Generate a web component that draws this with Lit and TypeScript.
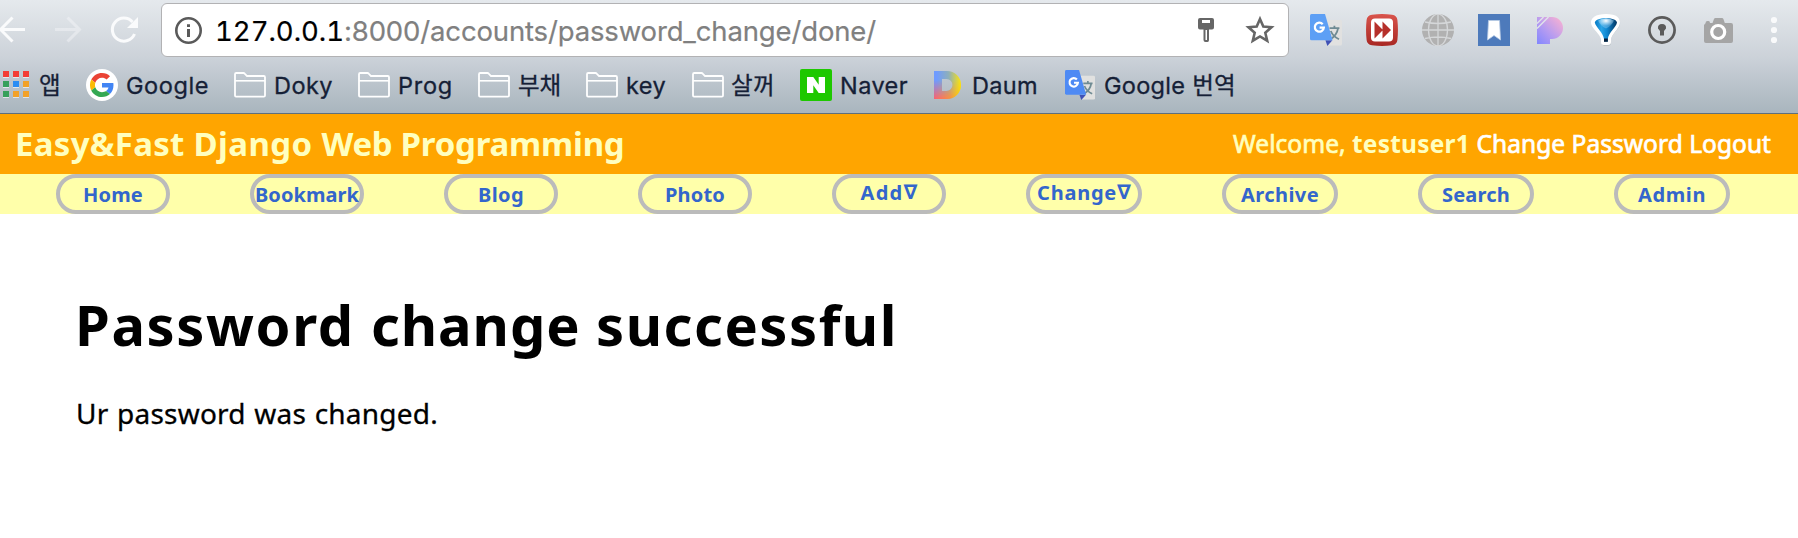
import { LitElement, html, svg, css } from "lit";
import { customElement, property } from "lit/decorators.js";
import { styleMap } from "lit/directives/style-map.js";

/** A run of text whose tracking is adjusted so that it takes up a given width. */
@customElement("fit-text")
class FitText extends LitElement {
  @property({ type: Number }) width = 0;

  static styles = css`
    :host { display: inline-block; white-space: pre; }
  `;

  updated() {
    const count = [...(this.textContent ?? "")].length;
    this.style.letterSpacing = "0px";
    const natural = this.getBoundingClientRect().width;
    this.style.letterSpacing = `${(this.width - natural) / count}px`;
  }

  render() {
    return html`<slot></slot>`;
  }
}

const folder = html`<svg width="32" height="32" viewBox="0 0 32 32" fill="none" stroke="#fff" stroke-width="1.8">
  <path d="M1 26.6V5.2Q1 4 2.2 4H9.4Q10.2 4 10.7 4.6L13 7H29.8Q31 7 31 8.2V26.4Q31 27.6 29.8 27.6H2Q1 27.6 1 26.6Z"/>
  <path d="M1 11.8H31" stroke-width="1.6"/>
</svg>`;

const translate = (size: number, front: string) => html`<svg width=${size} height=${size} viewBox="0 0 32 32">
  <path d="M13 6H30.5Q32 6 32 7.5V30Q32 31.5 30.5 31.5H18Z" fill="#e1e1e0"/>
  <g fill="none" stroke="#6f8b93" stroke-width="1.8">
    <path d="M19.5 14.2H29.4M24.4 11.8V14.2M20.5 25.3Q27 21 28 14.4M20.8 17Q23 22.6 29 25.3"/>
  </g>
  <path d="M15.4 26.3H22.4L17.4 32Z" fill="#3f51b5"/>
  <path d="M1.5 0H15L22.6 26.3H1.5Q0 26.3 0 24.8V1.5Q0 0 1.5 0Z" fill=${front}/>
  <path d="M12.7 10.2A4.5 4.5 0 1 0 13.8 13.6H9.6" fill="none" stroke="#fff" stroke-width="2.3"/>
</svg>`;

const apps = html`<svg width="28" height="32" viewBox="0 0 28 32">
  ${["#f33c35", "#f33c35", "#f33c35", "#36a05b", "#2a8df4", "#f2a128", "#36a05b", "#f2a128", "#f2a128"].map(
    (c, i) => svg`<rect x=${(i % 3) * 10} y=${3 + Math.floor(i / 3) * 10} width="6" height="6" fill="#fff" opacity=".6"/>
      <rect x=${(i % 3) * 10} y=${2 + Math.floor(i / 3) * 10} width="6" height="6" fill=${c}/>`
  )}
</svg>`;

const google = html`<svg width="32" height="32" viewBox="0 0 32 32">
  <circle cx="16" cy="16" r="16" fill="#fff"/>
  <g transform="translate(4 4)">
    <path fill="#ea4335" d="M12 4.76c1.77 0 3.35.6 4.6 1.8l3.42-3.42C17.95 1.19 15.24 0 12 0 7.31 0 3.26 2.7 1.28 6.62l3.98 3.08C6.22 6.86 8.87 4.76 12 4.76Z"/>
    <path fill="#4285f4" d="M23.49 12.28c0-.79-.07-1.54-.19-2.28H12v4.51h6.47c-.29 1.48-1.14 2.73-2.4 3.58l3.87 3c2.26-2.09 3.55-5.17 3.55-8.81Z"/>
    <path fill="#fbbc05" d="M5.26 14.3a7.2 7.2 0 0 1 0-4.6L1.28 6.62a12 12 0 0 0 0 10.76Z"/>
    <path fill="#34a853" d="M12 24c3.24 0 5.96-1.06 7.94-2.91l-3.87-3c-1.08.72-2.45 1.16-4.07 1.16-3.13 0-5.78-2.1-6.74-4.95l-3.98 3.08C3.26 21.3 7.31 24 12 24Z"/>
  </g>
</svg>`;

const naver = html`<svg width="32" height="32" viewBox="0 0 32 32">
  <rect width="32" height="32" rx="2" fill="#1ec800"/>
  <path d="M7 8H13.3L18.7 15.8V8H25V24H18.7L13.3 16.2V24H7Z" fill="#fff"/>
</svg>`;

const daum = html`<svg width="28" height="32" viewBox="0 0 28 32">
  <defs>
    <linearGradient id="d1" x1="0" y1="0" x2="1" y2="0">
      <stop offset=".1" stop-color="#6f9bff"/><stop offset=".55" stop-color="#8fb0b8"/><stop offset="1" stop-color="#ffe50a"/>
    </linearGradient>
    <linearGradient id="d2" x1="0" y1="0" x2="1" y2="0">
      <stop offset="0" stop-color="#ff5f6e"/><stop offset=".6" stop-color="#ff9038"/><stop offset="1" stop-color="#ffd400"/>
    </linearGradient>
    <linearGradient id="d3" x1="0" y1="0" x2="0" y2="1">
      <stop offset=".35" stop-color="#000"/><stop offset=".95" stop-color="#fff"/>
    </linearGradient>
    <mask id="dm"><rect width="28" height="32" fill="url(#d3)"/></mask>
  </defs>
  <path fill-rule="evenodd" fill="url(#d1)" d="M0 2H13A14 14 0 0 1 13 30H0ZM8 10V22H12.5A6 6 0 0 0 12.5 10Z"/>
  <path mask="url(#dm)" fill-rule="evenodd" fill="url(#d2)" d="M0 2H13A14 14 0 0 1 13 30H0ZM8 10V22H12.5A6 6 0 0 0 12.5 10Z"/>
</svg>`;

/* lead: space before the icon; gap: icon to label; width: label width */
const bookmarks = [
  { icon: apps, label: "앱", lead: 3, gap: 8, width: 22 },
  { icon: google, label: "Google", lead: 25, gap: 8, width: 83 },
  { icon: folder, label: "Doky", lead: 25, gap: 8, width: 59 },
  { icon: folder, label: "Prog", lead: 25, gap: 8, width: 55 },
  { icon: folder, label: "부채", lead: 25, gap: 8, width: 43 },
  { icon: folder, label: "key", lead: 25, gap: 8, width: 40 },
  { icon: folder, label: "살꺼", lead: 26, gap: 7, width: 44 },
  { icon: naver, label: "Naver", lead: 25, gap: 8, width: 68 },
  { icon: daum, label: "Daum", lead: 26, gap: 10, width: 66 },
  { icon: translate(30, "#4e8af4"), label: "Google 번역", lead: 27, gap: 9, width: 132 },
];

const extensions = [
  translate(32, "#5d9ff5"),
  html`<svg width="32" height="32" viewBox="0 0 32 32">
    <defs><linearGradient id="r1" x1="0" y1="0" x2="0" y2="1"><stop offset="0" stop-color="#d9544c"/><stop offset="1" stop-color="#a82823"/></linearGradient></defs>
    <path d="M6 .7Q16-.6 26 .7Q31 1.4 31.4 6Q32.5 16 31.4 26Q31 30.6 26 31.3Q16 32.6 6 31.3Q1 30.6.6 26Q-.5 16 .6 6Q1 1.4 6 .7Z" fill="url(#r1)"/>
    <rect x="5" y="4.5" width="22" height="23" rx="4" fill="#fff"/>
    <path d="M8.5 7.5L17 16L8.5 24.5ZM16.5 7.5L25 16L16.5 24.5Z" fill="#b6302b"/>
  </svg>`,
  html`<svg width="32" height="32" viewBox="0 0 32 32">
    <circle cx="16" cy="16" r="16" fill="#b1b1b1"/>
    <g fill="none" stroke="#d5d7d9" stroke-width="1.3">
      <path d="M16 0V32M0 16H32M3 8Q16 11 29 8M3 24.5Q16 21.5 29 24.5"/><ellipse cx="16" cy="16" rx="9.5" ry="16"/>
    </g>
  </svg>`,
  html`<svg width="32" height="32" viewBox="0 0 32 32">
    <rect width="32" height="32" fill="#4d7abb"/>
    <path d="M10.5 6.5H21.5L22.5 26L16 21.5L9.5 26Z" fill="#fff" stroke="#b9cbe5" stroke-width=".8"/>
  </svg>`,
  html`<svg width="32" height="32" viewBox="0 0 32 32">
    <defs><linearGradient id="p1" x1="0" y1="1" x2="1" y2="0"><stop offset="0" stop-color="#8186ff"/><stop offset=".45" stop-color="#b79cf0"/><stop offset="1" stop-color="#ffb3cf"/></linearGradient></defs>
    <path d="M3 3H18A11 11 0 0 1 18 25H16V30H3Z" fill="url(#p1)"/>
    <path d="M3 9.5L9.5 3M3 14.5L14.5 3" stroke="#e0e2ea" stroke-width="1.5"/>
  </svg>`,
  html`<svg width="32" height="32" viewBox="0 0 32 32">
    <defs>
      <linearGradient id="b1" x1="0" y1="0" x2="1" y2="0"><stop offset="0" stop-color="#0679c4"/><stop offset=".3" stop-color="#2ba4e6"/><stop offset=".55" stop-color="#0f86d0"/><stop offset="1" stop-color="#033560"/></linearGradient>
      <radialGradient id="b2" cx=".5" cy=".25" r=".5"><stop offset="0" stop-color="#fff"/><stop offset="1" stop-color="#c5e6fb" stop-opacity=".3"/></radialGradient>
    </defs>
    <path d="M16.5 1.3C27 1.3 31 5 30 10.5C29 15 22 20 21 25V29Q21 31.8 18 31.8H14.5Q12 31.8 12 29V25C11 20 3.5 15 2.5 10.5C1.5 5 6 1.3 16.5 1.3Z" fill="#8c949c" opacity=".45"/>
    <path d="M16 0C26.5 0 31 4 29.8 10C28.5 15 22 20 21 25V28Q21 31 18 31H14Q11 31 11 28V25C10 20 2.5 15 1.2 10C0 4 5.5 0 16 0Z" fill="#fff"/>
    <path d="M4.8 8.5C6 2.5 26 2.5 27 8.5C26 13.5 18.5 18.5 17.8 25V27.5H14V25C13.2 18.5 6 13.5 4.8 8.5Z" fill="url(#b1)"/>
    <path d="M8 6.5Q16 2 24 6.5Q22 11.5 16 14.5Q10 11.5 8 6.5Z" fill="url(#b2)"/>
    <path d="M14 24.5H17.8V27.8H14Z" fill="#06203c"/>
  </svg>`,
  html`<svg width="32" height="32" viewBox="0 0 32 32">
    <circle cx="16" cy="16" r="12.6" fill="none" stroke="#5b5b5b" stroke-width="2.7"/>
    <path d="M12 14.5Q11.5 10 16 10Q20.5 10 20 14.5L18 17V21.5H14V17Z" fill="#5b5b5b"/>
  </svg>`,
  html`<svg width="32" height="32" viewBox="0 0 32 32">
    <path d="M3.5 9.2Q3.5 7 5.5 7H6.5Q8 7 8 9H10.5L12 5Q12.4 4 13.5 4H20Q21 4 21.4 5L22.8 9H29Q31 9 31 11V27Q31 29 29 29H4Q2 29 2 27V11Z" fill="#a5a5a5"/>
    <circle cx="16.2" cy="18" r="6.5" fill="none" stroke="#fff" stroke-width="3.2"/>
  </svg>`,
];

const navItems = [
  { label: "Home", lead: 56, box: 114, width: 60 },
  { label: "Bookmark", lead: 80, box: 114, width: 104 },
  { label: "Blog", lead: 80, box: 114, width: 46 },
  { label: "Photo", lead: 80, box: 114, width: 60 },
  { label: "Add", menu: true, lead: 80, box: 114, width: 43 },
  { label: "Change", menu: true, lead: 80, box: 116, width: 80 },
  { label: "Archive", lead: 80, box: 116, width: 78 },
  { label: "Search", lead: 80, box: 116, width: 68 },
  { label: "Admin", lead: 80, box: 116, width: 68 },
];

@customElement("app-root")
class AppRoot extends LitElement {
  static styles = css`
    :host {
      display: block; height: 538px; overflow: hidden; background: #fff; color: #000;
      font-family: "Noto Sans", "Open Sans", sans-serif;
    }
    svg { display: block; flex: none; }
    .chrome {
      height: 114px; box-sizing: border-box; border-bottom: 1px solid #5f6f7c;
      background: linear-gradient(#e5e9ed 0, #d9dee3 28px, #ccd2d9 57px, #bac3cb 85px, #a9b5be 113px);
      font-family: "Inter", "Noto Sans CJK KR", sans-serif;
    }
    .toolbar { display: flex; align-items: center; height: 60px; }
    .controls { display: flex; width: 161px; }
    .omnibox {
      display: flex; align-items: center; box-sizing: border-box; width: 1128px; height: 54px;
      padding: 0 12px; border: 1px solid #b2b2b4; border-radius: 6px; background: #fff;
    }
    .url { flex: 1; margin-left: 11px; font-size: 27.5px; line-height: 52px; padding-top: 2px; color: #808080; white-space: nowrap; -webkit-text-stroke: 0.2px currentColor; }
    .host { color: #000; font-variant-numeric: tabular-nums; }
    .key { margin-right: 28px; }
    .extensions { display: flex; gap: 24px; margin-left: 21px; }
    .more { margin-left: 33px; }
    .bookmarks { display: flex; height: 50px; align-items: center; }
    .bookmark { display: flex; align-items: center; font-size: 23.5px; line-height: 32px; color: #152036; white-space: nowrap; -webkit-text-stroke: 0.3px #152036; }
    .bookmark fit-text { padding-top: 2px; }
    .banner {
      display: flex; justify-content: space-between; height: 60px; padding: 0 27px 0 15px;
      background: #ffa500; color: #ffffbf; white-space: nowrap;
    }
    .title { font-size: 33px; line-height: 60px; font-weight: 700; }
    .user { font-size: 24.5px; line-height: 59px; -webkit-text-stroke: 0.7px currentColor; }
    .name { font-weight: 700; -webkit-text-stroke: 0; }
    .link { color: #fff; }
    .nav { display: flex; height: 40px; background: #ffffaa; }
    .pill {
      display: flex; justify-content: center; box-sizing: border-box; height: 40px; border: 4px solid #bbb;
      border-radius: 20px; color: #36c; font-size: 20px; line-height: 33px; font-weight: 700; white-space: nowrap;
    }
    .menu { line-height: 29px; }
    .arrow { font-family: "DejaVu Sans", sans-serif; font-size: 20px; }
    .content { padding: 72px 0 0 75px; }
    .heading { margin: 0; font-size: 56px; line-height: 77px; font-weight: 700; white-space: nowrap; }
    .message { margin: 31px 0 0; padding-left: 1px; font-size: 28px; line-height: 38px; word-spacing: 1px; -webkit-text-stroke: 0.3px #000; }
  `;

  render() {
    return html`
      <div class="chrome">
        <div class="toolbar">
          <div class="controls">
            <svg width="161" height="60" viewBox="0 0 161 60" fill="none" stroke="#fafbfc" stroke-width="3">
              <path d="M25 29.5H1M12.5 17.5L.5 29.5L12.5 41.5"/>
              <path d="M55 29.5H79M67.5 17.5L79.5 29.5L67.5 41.5" opacity=".4"/>
              <path d="M134.5 34A11.5 11.5 0 1 1 132.5 22"/>
              <path d="M138 17V28H127Z" fill="#fafbfc" stroke="none"/>
            </svg>
          </div>
          <div class="omnibox">
            <svg width="30" height="30" viewBox="0 0 30 30">
              <circle cx="14.5" cy="15.5" r="12.2" fill="none" stroke="#5a5a5a" stroke-width="2.6"/>
              <path d="M13 9.3H16V12H13ZM13 14H16V22H13Z" fill="#5a5a5a"/>
            </svg>
            <div class="url"><fit-text class="host" width="129">127.0.0.1</fit-text><fit-text width="532">:8000/accounts/password_change/done/</fit-text></div>
            <svg class="key" width="20" height="30" viewBox="0 0 20 30">
              <path fill-rule="evenodd" d="M4 3H16Q18 3 18 5V12.5Q18 14.5 16 14.5H13V25Q13 27 11.5 27H9.5Q7.5 27 7.5 25V14.5H4Q2 14.5 2 12.5V5Q2 3 4 3ZM6 5V8H14V5ZM9.5 15V25H11V15Z" fill="#666"/>
            </svg>
            <svg width="32" height="30" viewBox="0 0 32 30">
              <path d="M16 4L19.3 11.6L27.5 12.3L21.3 17.7L23.2 25.7L16 21.4L8.8 25.7L10.7 17.7L4.5 12.3L12.7 11.6Z" fill="none" stroke="#666" stroke-width="2.6"/>
            </svg>
          </div>
          <div class="extensions">${extensions}</div>
          <svg class="more" width="18" height="32" viewBox="0 0 18 32" fill="#f9fafb">
            <circle cx="7" cy="6" r="3.1"/><circle cx="7" cy="16" r="3.1"/><circle cx="7" cy="26" r="3.1"/>
          </svg>
        </div>
        <div class="bookmarks">
          ${bookmarks.map(
            (b) => html`<div class="bookmark" style=${styleMap({ marginLeft: `${b.lead}px`, gap: `${b.gap}px` })}>
              ${b.icon}<fit-text width=${b.width}>${b.label}</fit-text>
            </div>`
          )}
        </div>
      </div>
      <div class="banner">
        <div class="title"><fit-text width="178.5">Easy&amp;Fast </fit-text><fit-text width="128">Django </fit-text><fit-text width="79">Web </fit-text><fit-text width="224">Programming</fit-text></div>
        <div class="user"><fit-text width="119">Welcome, </fit-text><fit-text class="name" width="118">testuser1</fit-text><fit-text class="link" width="301"> Change Password Logout</fit-text></div>
      </div>
      <div class="nav">
        ${navItems.map(
          (n) => html`<div class="pill ${n.menu ? "menu" : ""}" style=${styleMap({ marginLeft: `${n.lead}px`, width: `${n.box}px` })}>
            <fit-text width=${n.width}>${n.label}</fit-text>${n.menu ? html`<span class="arrow">∇</span>` : ""}
          </div>`
        )}
      </div>
      <div class="content">
        <h1 class="heading"><fit-text width="296">Password </fit-text><fit-text width="225">change </fit-text><fit-text width="302">successful</fit-text></h1>
        <p class="message"><fit-text width="362">Ur password was changed.</fit-text></p>
      </div>
    `;
  }
}
